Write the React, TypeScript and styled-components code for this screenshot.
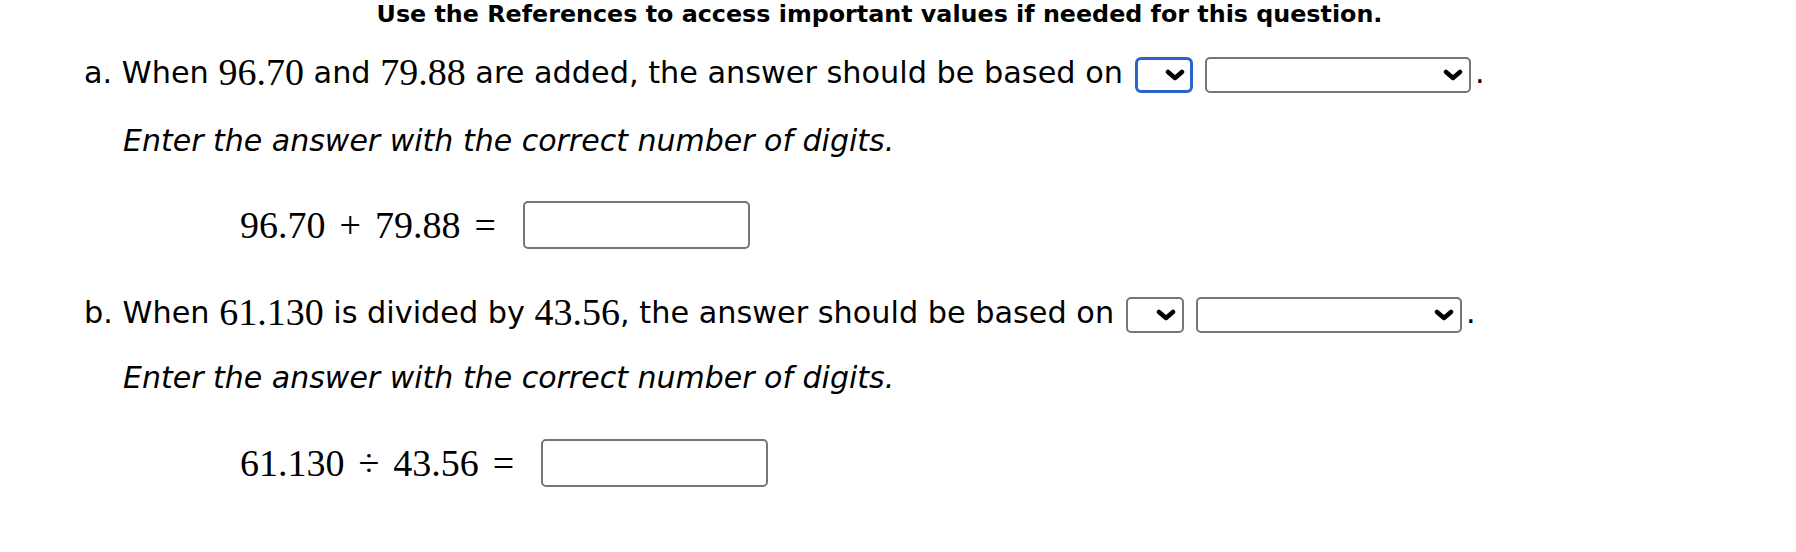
import styled, { createGlobalStyle } from "styled-components";

const GlobalStyle = createGlobalStyle`
  body {
    margin: 0;
    background: #fff;
    color: #000;
    font-family: "DejaVu Sans", Verdana, sans-serif;
  }
`;

const Page = styled.main`
  width: 1796px;
  height: 552px;
  display: flex;
  flex-direction: column;
`;

const Banner = styled.div`
  width: 1759px;
  height: 28px;
  display: flex;
  align-items: center;
  justify-content: center;
  font-size: 23.8px;
  font-weight: bold;
`;

const Part = styled.section<{ $top: number }>`
  display: flex;
  flex-direction: column;
  margin-top: ${(p) => p.$top}px;
  padding-left: 84px;
`;

const QuestionLine = styled.div`
  height: 36px;
  display: flex;
  align-items: center;
  font-size: 30.3px;
  white-space: pre;
`;

const Num = styled.span`
  font-family: "Liberation Serif", "Times New Roman", serif;
  font-size: 38px;
`;

const Instruction = styled.div<{ $top: number }>`
  height: 36px;
  display: flex;
  align-items: center;
  margin-top: ${(p) => p.$top}px;
  padding-left: 39px;
  font-size: 30px;
  font-style: italic;
`;

const Equation = styled.div<{ $top: number }>`
  height: 48px;
  display: flex;
  align-items: center;
  margin-top: ${(p) => p.$top}px;
  padding-left: 156px;
  font-family: "Liberation Serif", "Times New Roman", serif;
  font-size: 38px;
  gap: 27px;
`;

const MathText = styled.span`
  display: flex;
  gap: 14px;
`;

const AnswerBox = styled.div`
  width: 227px;
  height: 48px;
  box-sizing: border-box;
  border: 2px solid #767676;
  border-radius: 5px;
`;

const Select = styled.div<{ $width: number; $focused?: boolean }>`
  width: ${(p) => p.$width}px;
  height: 36px;
  box-sizing: border-box;
  border: ${(p) => (p.$focused ? "3px solid #2e62cb" : "2px solid #767676")};
  border-radius: ${(p) => (p.$focused ? 6 : 5)}px;
  display: flex;
  align-items: center;
  justify-content: flex-end;
  padding-right: ${(p) => (p.$focused ? 5 : 6)}px;
  margin: 6px 0 0 12px;
`;

const Period = styled.span`
  margin-left: 4px;
`;

const Chevron = () => (
  <svg width="20" height="12" viewBox="0 0 20 12">
    <path
      d="M3 3 L10 9 L17 3"
      fill="none"
      stroke="#000"
      strokeWidth="4.5"
      strokeLinecap="round"
      strokeLinejoin="round"
    />
  </svg>
);

const Choice = ({ width, focused }: { width: number; focused?: boolean }) => (
  <Select $width={width} $focused={focused}>
    <Chevron />
  </Select>
);

const App = () => (
  <>
    <GlobalStyle />
    <Page>
      <Banner>Use the References to access important values if needed for this question.</Banner>

      <Part $top={26}>
        <QuestionLine>
          a. When <Num>96.70</Num> and <Num>79.88</Num> are added, the answer should be based on
          <Choice width={58} focused />
          <Choice width={266} />
          <Period>.</Period>
        </QuestionLine>
        <Instruction $top={32}>Enter the answer with the correct number of digits.</Instruction>
        <Equation $top={43}>
          <MathText>
            <span>96.70</span>
            <span>+</span>
            <span>79.88</span>
            <span>=</span>
          </MathText>
          <AnswerBox />
        </Equation>
      </Part>

      <Part $top={45}>
        <QuestionLine>
          b. When <Num>61.130</Num> is divided by <Num>43.56</Num>, the answer should be based on
          <Choice width={58} />
          <Choice width={266} />
          <Period>.</Period>
        </QuestionLine>
        <Instruction $top={29}>Enter the answer with the correct number of digits.</Instruction>
        <Equation $top={44}>
          <MathText>
            <span>61.130</span>
            <span>÷</span>
            <span>43.56</span>
            <span>=</span>
          </MathText>
          <AnswerBox />
        </Equation>
      </Part>
    </Page>
  </>
);

export default App;
